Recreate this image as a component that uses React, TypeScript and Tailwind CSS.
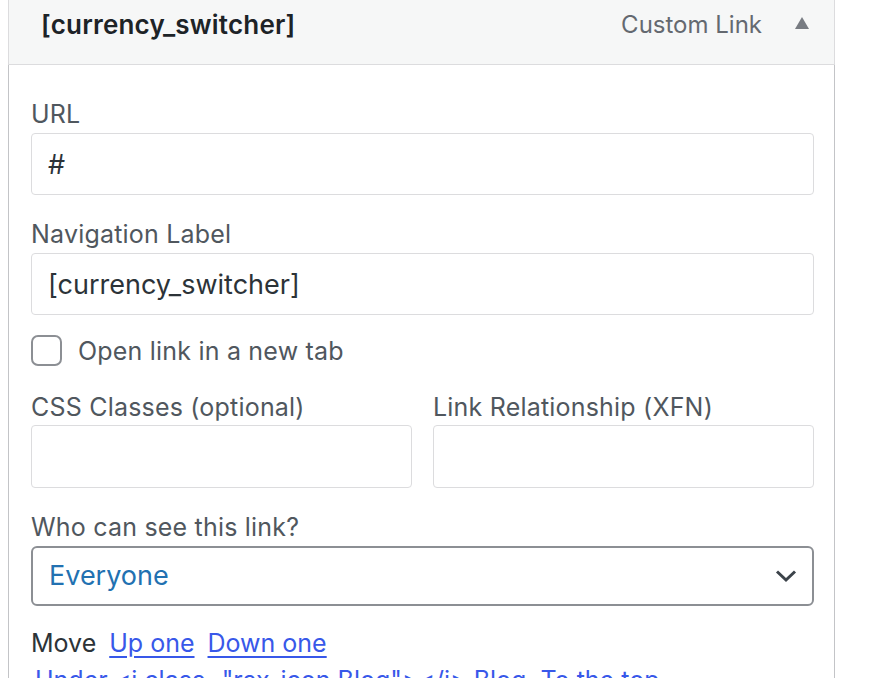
import React from 'react';

const font = { fontFamily: 'Inter, "Noto Sans", sans-serif' };

export default function App() {
  return (
    <div className="w-[876px] h-[678px] overflow-hidden bg-white" style={font}>
      <div className="ml-[8px] w-[827px]">
        {/* Header */}
        <div className="h-[65px] bg-[#f6f7f7] border-x border-b border-[#dcdcde] flex items-start justify-between pl-[32px] pr-[25px] pt-[7px]">
          <span className="text-[26px] leading-[36px] font-semibold text-[#1d2327] tracking-[0.2px]">[currency_switcher]</span>
          <div className="flex items-center gap-[33px]">
            <span className="text-[24px] leading-[36px] text-[#646970]">Custom Link</span>
            <svg width="14" height="12" viewBox="0 0 14 12" className="mb-[4px]">
              <polygon points="7,0 14,12 0,12" fill="#787c82" />
            </svg>
          </div>
        </div>

        {/* Body */}
        <div className="border-x border-[#c3c4c7] pl-[22px] pr-[20px] pt-[33px] pb-[20px] text-[25px]">
          <label className="block leading-[32px] text-[#50575e] mb-[3px] tracking-[0.2px]">URL</label>
          <input
            type="text"
            defaultValue="#"
            className="w-full h-[62px] rounded-[4px] border border-[#dcdcde] px-[16px] text-[27px] text-[#2c3338] outline-none"
          />

          <label className="block leading-[32px] text-[#50575e] mt-[23px] mb-[3px] tracking-[0.2px]">Navigation Label</label>
          <input
            type="text"
            defaultValue="[currency_switcher]"
            className="w-full h-[62px] rounded-[4px] border border-[#dcdcde] px-[16px] text-[27px] text-[#2c3338] outline-none"
          />

          <div className="flex items-center gap-[16px] mt-[20px]">
            <span className="w-[31px] h-[31px] rounded-[7px] border-2 border-[#8c8f94] bg-white" />
            <span className="text-[#50575e] leading-[30px] tracking-[0.2px]">Open link in a new tab</span>
          </div>

          <div className="grid grid-cols-2 gap-[21px] mt-[25px]">
            <div>
              <label className="block leading-[32px] text-[#50575e] mb-[2px] tracking-[0.2px]">CSS Classes (optional)</label>
              <input className="w-full h-[63px] rounded-[4px] border border-[#dcdcde] outline-none" />
            </div>
            <div>
              <label className="block leading-[32px] text-[#50575e] mb-[2px] tracking-[0.2px]">Link Relationship (XFN)</label>
              <input className="w-full h-[63px] rounded-[4px] border border-[#dcdcde] outline-none" />
            </div>
          </div>

          <label className="block leading-[32px] text-[#50575e] mt-[23px] mb-[3px] tracking-[0.2px]">Who can see this link?</label>
          <div className="h-[60px] rounded-[6px] border-2 border-[#8c8f94] flex items-center justify-between pl-[16px] pr-[15px]">
            <span className="text-[#2271b1] text-[27px]">Everyone</span>
            <svg width="22" height="14" viewBox="0 0 22 14" fill="none">
              <path d="M2 2.5 L11 11 L20 2.5" stroke="#3c434a" strokeWidth="3" />
            </svg>
          </div>

          <div className="flex items-center gap-[13px] mt-[22px] leading-[30px]">
            <span className="text-[#2c3338]">Move</span>
            <a className="text-[#3858e9] underline underline-offset-[4px]">Up one</a>
            <a className="text-[#3858e9] underline underline-offset-[4px]">Down one</a>
          </div>
          <div className="flex items-center gap-[14px] mt-[7px] leading-[30px] pl-[4px] whitespace-nowrap">
            <a className="text-[#3858e9] underline underline-offset-[4px]">Under &lt;i class="rsx-icon Blog"&gt;&lt;/i&gt; Blog</a>
            <a className="text-[#3858e9] underline underline-offset-[4px]">To the top</a>
          </div>
        </div>
      </div>
    </div>
  );
}
